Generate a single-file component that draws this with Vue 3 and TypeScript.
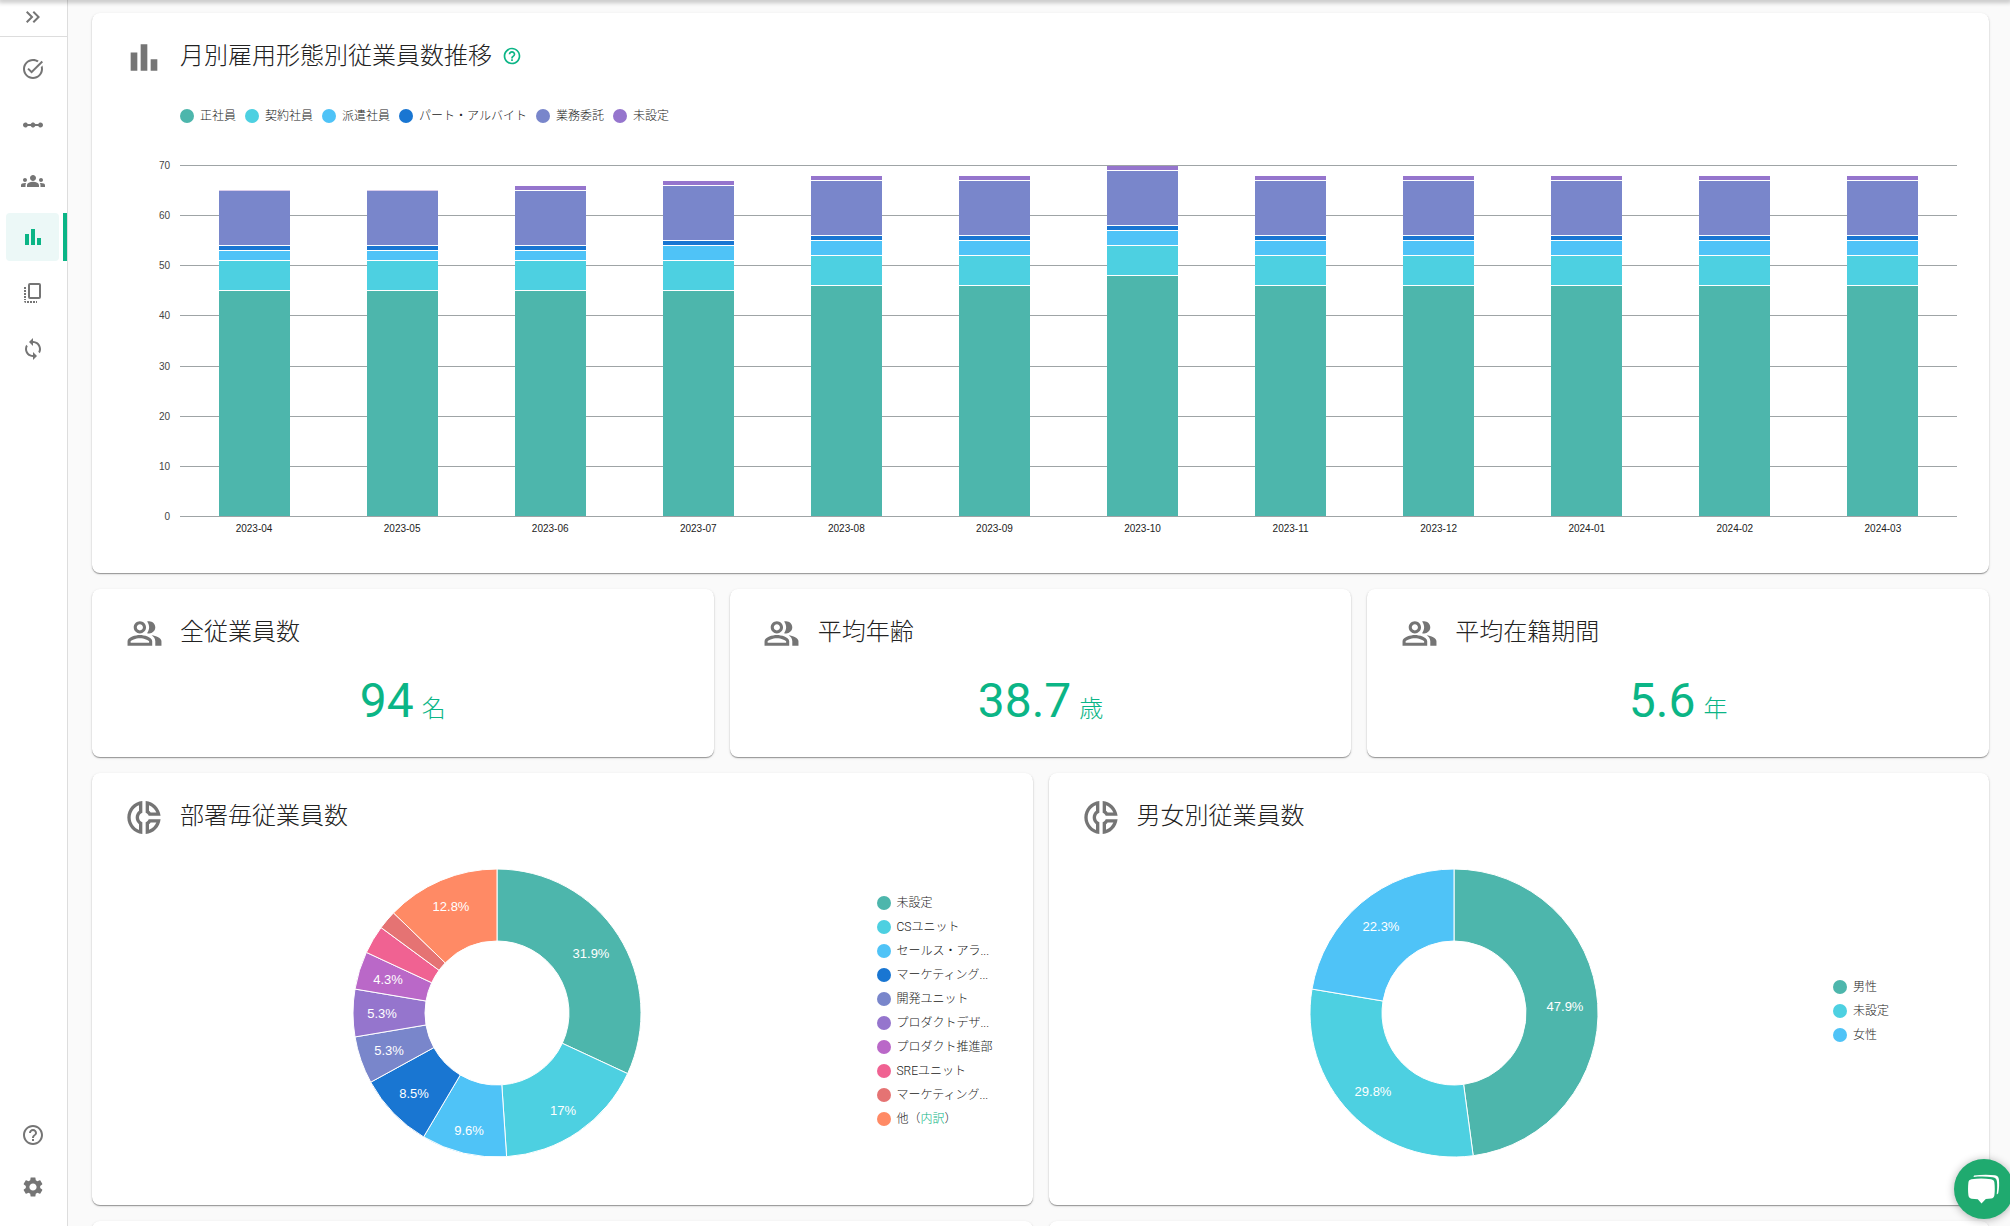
<script setup lang="ts">
interface Slice {
  label: string
  value: number
  color: string
  link?: string
}
interface DrawnSlice {
  d: string
  color: string
  text: string
  x: number
  y: number
}

const palette = [
  '#4db6ac', '#4dd0e1', '#4fc3f7', '#1976d2', '#7986cb',
  '#9575cd', '#ba68c8', '#f06292', '#e57373', '#ff8a65',
]

const icons = {
  expand: 'M6.41 6L5 7.41 9.58 12 5 16.59 6.41 18l6-6zM13 6l-1.41 1.41L16.17 12l-4.58 4.59L13 18l6-6z',
  task: 'M22 5.18 10.59 16.6l-4.24-4.24 1.41-1.41 2.83 2.83 10-10L22 5.18zm-2.21 5.04c.13.57.21 1.17.21 1.78 0 4.42-3.58 8-8 8s-8-3.58-8-8 3.58-8 8-8c1.58 0 3.04.46 4.28 1.25l1.44-1.44C16.1 2.67 14.13 2 12 2 6.48 2 2 6.48 2 12s4.48 10 10 10 10-4.48 10-10c0-1.19-.22-2.33-.6-3.39l-1.61 1.61z',
  scale: 'M19.5 9.5c-1.03 0-1.9.62-2.29 1.5h-2.92c-.39-.88-1.26-1.5-2.29-1.5s-1.9.62-2.29 1.5H6.79c-.39-.88-1.26-1.5-2.29-1.5C3.12 9.5 2 10.62 2 12s1.12 2.5 2.5 2.5c1.03 0 1.9-.62 2.29-1.5h2.92c.39.88 1.26 1.5 2.29 1.5s1.9-.62 2.29-1.5h2.92c.39.88 1.26 1.5 2.29 1.5 1.38 0 2.5-1.12 2.5-2.5s-1.12-2.5-2.5-2.5z',
  groups: 'M12 12.75c1.63 0 3.07.39 4.24.9 1.08.48 1.76 1.56 1.76 2.73V18H6v-1.61c0-1.18.68-2.26 1.76-2.73 1.17-.52 2.61-.91 4.24-.91zM4 13c1.1 0 2-.9 2-2s-.9-2-2-2-2 .9-2 2 .9 2 2 2zm1.13 1.1c-.37-.06-.74-.1-1.13-.1-.99 0-1.93.21-2.78.58C.48 14.9 0 15.62 0 16.43V18h4.5v-1.61c0-.83.23-1.61.63-2.29zM20 13c1.1 0 2-.9 2-2s-.9-2-2-2-2 .9-2 2 .9 2 2 2zm4 3.43c0-.81-.48-1.53-1.22-1.85-.85-.37-1.79-.58-2.78-.58-.39 0-.76.04-1.13.1.4.68.63 1.46.63 2.29V18H24v-1.57zM12 6c1.66 0 3 1.34 3 3s-1.34 3-3 3-3-1.34-3-3 1.34-3 3-3z',
  bars: 'M4 9h4v11H4zM16 13h4v7h-4zM10 4h4v16h-4z',
  copy: 'M9 2h9a2 2 0 0 1 2 2v12a2 2 0 0 1-2 2H9a2 2 0 0 1-2-2V4a2 2 0 0 1 2-2zm0 2v12h9V4zM3 6h2v2H3zM3 9h2v2H3zM3 12h2v2H3zM3 15h2v2H3zM3 18h2v1H3zM3 20h2v2a2 2 0 0 1-2-2zM6 20h2v2H6zM9 20h2v2H9zM12 20h2v2h-2zM15 20h1v2h-1z',
  sync: 'M12 4V1L8 5l4 4V6c3.31 0 6 2.69 6 6 0 1.01-.25 1.97-.7 2.8l1.46 1.46C19.54 15.03 20 13.57 20 12c0-4.42-3.58-8-8-8zm0 14c-3.31 0-6-2.69-6-6 0-1.01.25-1.97.7-2.8L5.24 7.74C4.46 8.97 4 10.43 4 12c0 4.42 3.58 8 8 8v3l4-4-4-4v3z',
  help: 'M11 18h2v-2h-2v2zm1-16C6.48 2 2 6.48 2 12s4.48 10 10 10 10-4.48 10-10S17.52 2 12 2zm0 18c-4.41 0-8-3.59-8-8s3.59-8 8-8 8 3.59 8 8-3.59 8-8 8zm0-14c-2.21 0-4 1.79-4 4h2c0-1.1.9-2 2-2s2 .9 2 2c0 2-3 1.75-3 5h2c0-2.25 3-2.5 3-5 0-2.21-1.79-4-4-4z',
  settings: 'M19.14 12.94c.04-.3.06-.61.06-.94 0-.32-.02-.64-.07-.94l2.03-1.58c.18-.14.23-.41.12-.61l-1.92-3.32c-.12-.22-.37-.29-.59-.22l-2.39.96c-.5-.38-1.03-.7-1.62-.94l-.36-2.54c-.04-.24-.24-.41-.48-.41h-3.84c-.24 0-.43.17-.47.41l-.36 2.54c-.59.24-1.13.57-1.62.94l-2.39-.96c-.22-.08-.47 0-.59.22L2.74 8.87c-.12.21-.08.47.12.61l2.03 1.58c-.05.3-.09.63-.09.94s.02.64.07.94l-2.03 1.58c-.18.14-.23.41-.12.61l1.92 3.32c.12.22.37.29.59.22l2.39-.96c.5.38 1.03.7 1.62.94l.36 2.54c.05.24.24.41.48.41h3.84c.24 0 .44-.17.47-.41l.36-2.54c.59-.24 1.13-.56 1.62-.94l2.39.96c.22.08.47 0 .59-.22l1.92-3.32c.12-.22.07-.47-.12-.61l-2.01-1.58zM12 15.6c-1.98 0-3.6-1.62-3.6-3.6s1.62-3.6 3.6-3.6 3.6 1.62 3.6 3.6-1.62 3.6-3.6 3.6z',
  people: 'M16.67 13.13C18.04 14.06 19 15.32 19 17v3h4v-3c0-2.18-3.57-3.47-6.33-3.87zM15 12c2.21 0 4-1.79 4-4s-1.79-4-4-4c-.47 0-.91.1-1.33.24C14.5 5.27 15 6.58 15 8s-.5 2.73-1.33 3.76c.42.14.86.24 1.33.24zM9 12c2.21 0 4-1.79 4-4s-1.79-4-4-4-4 1.79-4 4 1.79 4 4 4zm0-6c1.1 0 2 .9 2 2s-.9 2-2 2-2-.9-2-2 .9-2 2-2zM9 13c-2.67 0-8 1.34-8 4v3h16v-3c0-2.66-5.33-4-8-4zm6 5H3v-.99C3.2 16.29 6.3 15 9 15s5.8 1.29 6 2v1z',
  donut: 'M14.82 11h7.13c-.47-4.72-4.23-8.48-8.95-8.95v7.13c.85.31 1.51.97 1.82 1.82zM15 4.58C17 5.4 18.6 7 19.42 9h-3.43c-.28-.37-.62-.71-.99-.99V4.58zM2 12c0 5.19 3.95 9.45 9 9.95v-7.13C9.84 14.4 9 13.3 9 12c0-1.3.84-2.4 2-2.82V2.05c-5.05.5-9 4.76-9 9.95zm7-7.42v3.44c-1.23.92-2 2.39-2 3.98 0 1.59.77 3.06 2 3.99v3.44C6.04 18.24 4 15.35 4 12c0-3.35 2.04-6.24 5-7.42zm4 10.24v7.13c4.72-.47 8.48-4.23 8.95-8.95h-7.13c-.31.85-.97 1.51-1.82 1.82zm2 1.17c.37-.28.71-.61.99-.99h3.43C18.6 17 17 18.6 15 19.42v-3.43z',
}

const nav = [
  { name: 'タスク', path: icons.task, active: false },
  { name: 'フロー', path: icons.scale, active: false },
  { name: '従業員', path: icons.groups, active: false },
  { name: 'レポート', path: icons.bars, active: true },
  { name: '書類', path: icons.copy, active: false },
  { name: '同期', path: icons.sync, active: false },
]

const series = ['正社員', '契約社員', '派遣社員', 'パート・アルバイト', '業務委託', '未設定']
const ticks = [70, 60, 50, 40, 30, 20, 10, 0]
const axisMax = 70
const months: { month: string; values: number[] }[] = [
  { month: '2023-04', values: [45, 6, 2, 1, 11, 0] },
  { month: '2023-05', values: [45, 6, 2, 1, 11, 0] },
  { month: '2023-06', values: [45, 6, 2, 1, 11, 1] },
  { month: '2023-07', values: [45, 6, 3, 1, 11, 1] },
  { month: '2023-08', values: [46, 6, 3, 1, 11, 1] },
  { month: '2023-09', values: [46, 6, 3, 1, 11, 1] },
  { month: '2023-10', values: [48, 6, 3, 1, 11, 1] },
  { month: '2023-11', values: [46, 6, 3, 1, 11, 1] },
  { month: '2023-12', values: [46, 6, 3, 1, 11, 1] },
  { month: '2024-01', values: [46, 6, 3, 1, 11, 1] },
  { month: '2024-02', values: [46, 6, 3, 1, 11, 1] },
  { month: '2024-03', values: [46, 6, 3, 1, 11, 1] },
]

const stats = [
  { title: '全従業員数', value: '94', unit: '名' },
  { title: '平均年齢', value: '38.7', unit: '歳' },
  { title: '平均在籍期間', value: '5.6', unit: '年' },
]

const R = 144
const INNER = 72
const LABEL_REACH = 130

// Builds ring segments clockwise from twelve o'clock; each label is pushed
// outwards until the far corner of its text box meets LABEL_REACH.
function ring(slices: Slice[]): DrawnSlice[] {
  const total = slices.reduce((sum, s) => sum + s.value, 0)
  let start = 0
  return slices.map((s) => {
    const end = start + (s.value / total) * Math.PI * 2
    const at = (r: number, a: number) =>
      `${(r * Math.sin(a)).toFixed(2)} ${(-r * Math.cos(a)).toFixed(2)}`
    const large = end - start > Math.PI ? 1 : 0
    const d =
      `M${at(R, start)}A${R} ${R} 0 ${large} 1 ${at(R, end)}` +
      `L${at(INNER, end)}A${INNER} ${INNER} 0 ${large} 0 ${at(INNER, start)}Z`
    const mid = (start + end) / 2
    const share = Math.round((s.value / total) * 1000) / 10
    const text = share >= 4 ? `${share}%` : ''
    const sx = Math.abs(Math.sin(mid))
    const cy = Math.abs(Math.cos(mid))
    const w = text.length > 4 ? 18 : text.length > 3 ? 15 : 13
    const h = 6
    const b = sx * w + cy * h
    const r = -b + Math.sqrt(b * b - (w * w + h * h) + LABEL_REACH * LABEL_REACH)
    start = end
    return {
      d,
      color: s.color,
      text,
      x: Math.round(r * Math.sin(mid)),
      y: Math.round(-r * Math.cos(mid)) + 5,
    }
  })
}

const departments: Slice[] = [
  { label: '未設定', value: 30 },
  { label: 'CSユニット', value: 16 },
  { label: 'セールス・アラ...', value: 9 },
  { label: 'マーケティング...', value: 8 },
  { label: '開発ユニット', value: 5 },
  { label: 'プロダクトデザ...', value: 5 },
  { label: 'プロダクト推進部', value: 4 },
  { label: 'SREユニット', value: 3 },
  { label: 'マーケティング...', value: 2 },
  { label: '他', value: 12, link: '内訳' },
].map((s, i) => ({ ...s, color: palette[i] }))

const genders: Slice[] = [
  { label: '男性', value: 45 },
  { label: '未設定', value: 28 },
  { label: '女性', value: 21 },
].map((s, i) => ({ ...s, color: palette[i] }))

const donuts = [
  { title: '部署毎従業員数', slices: departments, drawn: ring(departments) },
  { title: '男女別従業員数', slices: genders, drawn: ring(genders) },
]
</script>

<template>
  <div class="app">
    <header class="topbar"></header>
    <aside class="sidebar">
      <button class="toggle" type="button" aria-label="メニューを開く">
        <svg class="icon" viewBox="0 0 24 24"><path :d="icons.expand" /></svg>
      </button>
      <nav class="nav">
        <a v-for="n in nav" :key="n.name" href="#" class="nav-item" :class="{ active: n.active }" :aria-label="n.name">
          <span class="nav-chip"><svg class="icon" viewBox="0 0 24 24"><path :d="n.path" /></svg></span>
        </a>
      </nav>
      <div class="nav-foot">
        <a href="#" aria-label="ヘルプ"><svg class="icon" viewBox="0 0 24 24"><path :d="icons.help" /></svg></a>
        <a href="#" aria-label="設定"><svg class="icon" viewBox="0 0 24 24"><path :d="icons.settings" /></svg></a>
      </div>
    </aside>

    <main class="main">
      <section class="card trend">
        <div class="head">
          <span class="head-icon"><svg class="large" viewBox="0 0 24 24"><path :d="icons.bars" /></svg></span>
          <h2>月別雇用形態別従業員数推移</h2>
          <button class="hint" type="button" aria-label="説明">
            <svg viewBox="0 0 24 24"><path :d="icons.help" /></svg>
          </button>
        </div>
        <ul class="series">
          <li v-for="(s, i) in series" :key="s">
            <span class="dot" :style="{ background: palette[i] }"></span>{{ s }}
          </li>
        </ul>
        <div class="chart">
          <div class="y-axis">
            <span v-for="t in ticks" :key="t">{{ t }}</span>
          </div>
          <div class="plot">
            <div class="grid"><i v-for="n in 7" :key="n"></i></div>
            <div class="bars">
              <div v-for="m in months" :key="m.month" class="slot">
                <div class="bar">
                  <span
                    v-for="(v, i) in m.values"
                    :key="i"
                    class="seg"
                    :class="{ empty: v === 0 }"
                    :style="{ height: (v / axisMax) * 100 + '%', background: palette[i] }"
                  ></span>
                </div>
              </div>
            </div>
          </div>
          <div class="x-axis">
            <span v-for="m in months" :key="m.month">{{ m.month }}</span>
          </div>
        </div>
      </section>

      <div class="row thirds">
        <section v-for="s in stats" :key="s.title" class="card stat">
          <div class="head">
            <span class="head-icon"><svg class="medium" viewBox="0 0 24 24"><path :d="icons.people" /></svg></span>
            <h2>{{ s.title }}</h2>
          </div>
          <p class="figure"><strong>{{ s.value }}</strong><span>{{ s.unit }}</span></p>
        </section>
      </div>

      <div class="row halves">
        <section v-for="c in donuts" :key="c.title" class="card ratio">
          <div class="head">
            <span class="head-icon"><svg class="large" viewBox="0 0 24 24"><path :d="icons.donut" /></svg></span>
            <h2>{{ c.title }}</h2>
          </div>
          <div class="ratio-body">
            <div class="donut">
              <svg viewBox="-145 -145 290 290" role="img" :aria-label="c.title">
                <path v-for="(p, i) in c.drawn" :key="i" :d="p.d" :fill="p.color" stroke="#fff" stroke-width="1" />
                <template v-for="(p, i) in c.drawn" :key="'t' + i">
                  <text v-if="p.text" :x="p.x" :y="p.y" text-anchor="middle">{{ p.text }}</text>
                </template>
              </svg>
            </div>
            <ul class="legend">
              <li v-for="(s, i) in c.slices" :key="i">
                <span class="dot" :style="{ background: s.color }"></span>
                <span class="name">{{ s.label }}<template v-if="s.link">（<a href="#">{{ s.link }}</a>）</template></span>
              </li>
            </ul>
          </div>
        </section>
      </div>

      <div class="row halves">
        <section class="card ratio"></section>
        <section class="card ratio"></section>
      </div>
    </main>

    <button class="chat" type="button" aria-label="チャット">
      <svg viewBox="0 0 32 30">
        <path d="M6 1.500C13 .4 21 .4 27 1.200c2.500.4 3.600 1.500 3.900 4 .4 4 .4 9-.6 13.500-.2 1-.8 1.400-1.600 1.600.5-5 .7-9 .2-13-.3-2.500-1.600-3.800-4-4.100C18.500 2.500 12 2.400 5.500 3z" />
        <path d="M3.500 5.200c6.500-.8 13-.8 19.500 0 2 .3 3.200 1.400 3.400 3.400.5 4.500.5 8.500 0 12.600-.3 2-1.300 3.100-3.300 3.400-1.700.3-3.500.4-5.300.5L13.500 29.500 9.800 25.200c-2.100-.1-4.200-.2-6.200-.5-2-.3-3-1.400-3.200-3.400-.5-4.300-.5-8.400 0-12.700.2-2 1.200-3.100 3.100-3.400z" />
      </svg>
    </button>
  </div>
</template>

<style>
body {
  background: #fafafa;
  overflow: hidden;
}
</style>

<style scoped>
.app {
  display: flex;
  height: 100vh;
  overflow: hidden;
  background: #fafafa;
  color: #222;
  font-family: Roboto, "Noto Sans CJK JP", sans-serif;
  font-weight: 300;
}
.app * {
  box-sizing: border-box;
}
.topbar {
  position: fixed;
  inset: 0 0 auto 0;
  height: 0;
  box-shadow: 0 0 5px 2px rgba(0, 0, 0, 0.3);
  z-index: 3;
}
svg {
  display: block;
  fill: currentColor;
}
button {
  border: 0;
  padding: 0;
  background: none;
  color: inherit;
  font: inherit;
  cursor: pointer;
}
a {
  color: inherit;
  text-decoration: none;
}
ul {
  margin: 0;
  padding: 0;
  list-style: none;
}
.icon {
  width: 24px;
  height: 24px;
}

.sidebar {
  flex: none;
  display: flex;
  flex-direction: column;
  width: 68px;
  background: #fff;
  border-right: 1px solid #ddd;
  color: #757575;
}
.toggle {
  display: flex;
  align-items: center;
  justify-content: center;
  height: 37px;
  padding: 0 1px 2px 0;
  border-bottom: 1px solid #ddd;
}
.nav {
  display: flex;
  flex-direction: column;
  gap: 8px;
  padding-top: 8px;
}
.nav-item {
  display: flex;
  height: 48px;
  padding: 0 4px 0 6px;
  border-right: 4px solid transparent;
}
.nav-chip {
  display: flex;
  flex: 1;
  align-items: center;
  justify-content: center;
  border-radius: 4px;
}
.active {
  border-right-color: #0bb586;
  color: #0bb586;
}
.active .nav-chip {
  background: #ecf8f7;
}
.nav-foot {
  display: flex;
  flex-direction: column;
  align-items: center;
  gap: 28px;
  margin-top: auto;
  padding: 0 1px 27px 0;
}

.main {
  flex: 1;
  min-width: 0;
  display: flex;
  flex-direction: column;
  gap: 16px;
  padding: 13px 21px 0 24px;
}
.card {
  flex: none;
  background: #fff;
  border-radius: 8px;
  box-shadow: 0 1px 1px rgba(0, 0, 0, 0.35), 0 1px 3px rgba(0, 0, 0, 0.12);
}
.row {
  flex: none;
  display: grid;
  gap: 16px;
}
.thirds {
  grid-template-columns: repeat(3, 1fr);
}
.halves {
  grid-template-columns: repeat(2, 1fr);
}
.head {
  display: flex;
  align-items: center;
  padding: 24px 32px 0;
}
.head-icon {
  display: flex;
  align-items: center;
  justify-content: center;
  width: 40px;
  height: 40px;
  margin-right: 16px;
  color: #757575;
}
.large {
  width: 41px;
  height: 41px;
}
.medium {
  width: 37px;
  height: 37px;
}
h2 {
  margin: 0;
  padding-bottom: 2px;
  font-size: 24px;
  line-height: 36px;
  font-weight: 300;
}
.hint {
  margin-left: 10px;
  padding-bottom: 2px;
  color: #0bb586;
}
.hint svg {
  width: 20px;
  height: 20px;
}
.dot {
  flex: none;
  width: 14px;
  height: 14px;
  border-radius: 50%;
}

.trend {
  padding-bottom: 38px;
}
.series {
  display: flex;
  gap: 9px;
  padding: 30px 32px 0 88px;
  font-size: 12px;
  line-height: 18px;
}
.series li {
  display: flex;
  align-items: center;
  gap: 6px;
}
.chart {
  display: grid;
  grid-template-columns: 78px 1fr;
  column-gap: 10px;
  padding: 40px 32px 0 0;
  font-family: "Liberation Sans", Arial, sans-serif;
  font-size: 10px;
  line-height: 12px;
  font-weight: 400;
}
.y-axis {
  display: flex;
  flex-direction: column;
  justify-content: space-between;
  margin: -5px 0 -6px;
  color: #444;
  text-align: right;
}
.plot {
  display: grid;
  height: 352px;
}
.grid {
  grid-area: 1 / 1;
  display: flex;
  flex-direction: column;
  border-bottom: 1px solid #9fa4a6;
}
.grid i {
  flex: 1;
  border-top: 1px solid #9fa4a6;
}
.bars {
  grid-area: 1 / 1;
  display: flex;
  margin: 1px 0;
}
.slot {
  flex: 1;
  display: flex;
  justify-content: center;
}
.bar {
  display: flex;
  flex-direction: column-reverse;
  width: 48%;
  height: 100%;
}
.seg {
  flex: none;
  border-bottom: 1px solid #fff;
}
.seg:first-child {
  border-bottom: 0;
}
.empty {
  border-bottom-color: #d9cdeb;
}
.x-axis {
  grid-column: 2;
  display: flex;
  padding-top: 6px;
  text-align: center;
}
.x-axis span {
  flex: 1;
}

.stat {
  height: 168px;
}
.figure {
  display: flex;
  align-items: baseline;
  justify-content: center;
  gap: 8px;
  margin: 16px 0 0;
  color: #0bb586;
}
.figure strong {
  font-size: 48px;
  line-height: 64px;
  font-weight: 400;
}
.figure span {
  font-size: 24px;
}

.ratio {
  height: 432px;
}
.ratio-body {
  display: flex;
  align-items: center;
  padding: 31px 0 0 26px;
}
.donut {
  flex: 1;
  display: flex;
  justify-content: center;
}
.donut svg {
  width: 290px;
  height: 290px;
}
.donut text {
  fill: #fff;
  font-family: "Liberation Sans", Arial, sans-serif;
  font-size: 13px;
  font-weight: 400;
}
.legend {
  width: 156px;
  padding-bottom: 4px;
  font-size: 12px;
  line-height: 24px;
}
.legend li {
  display: flex;
  align-items: center;
  gap: 6px;
  height: 24px;
  white-space: nowrap;
}
.legend a {
  color: #0bb586;
}

.chat {
  position: fixed;
  right: -4px;
  bottom: 7px;
  display: flex;
  align-items: center;
  justify-content: center;
  width: 60px;
  height: 60px;
  border-radius: 50%;
  background: #1faa6f;
  color: #fff;
  box-shadow: 0 1px 8px rgba(0, 0, 0, 0.3);
}
.chat svg {
  width: 32px;
  height: 30px;
}
</style>
